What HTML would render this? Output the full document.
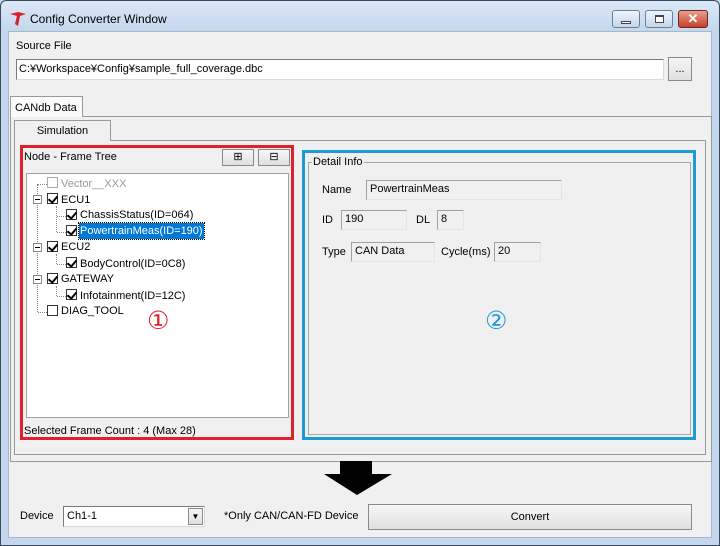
<!DOCTYPE html>
<html><head><meta charset="utf-8"><style>
*{box-sizing:border-box;margin:0;padding:0}
body{width:720px;height:546px;overflow:hidden;background:#c9dcf0;font-family:"Liberation Sans",sans-serif;font-size:11px;color:#000;position:relative}
.a{position:absolute}
.tb{border:1px solid #7a7a7a;border-right-color:#dcdcdc;border-bottom-color:#dcdcdc;background:#fff}
.ro{background:#f0f0f0;border:1px solid #a0a0a0;border-right-color:#e4e4e4;border-bottom-color:#e4e4e4;padding:2px 3px;font-size:11px}
.btn{background:linear-gradient(#f6f6f6,#e0e0e0);border:1px solid #8a8a8a;text-align:center}
.ti{position:absolute;height:16px;line-height:16px;font-size:11px;white-space:nowrap}
.cb{position:absolute;width:11px;height:11px;border:1px solid #333;background:#fff}
.cb.k::after{content:"";position:absolute;left:2px;top:0px;width:4px;height:7px;border:solid #000;border-width:0 2px 2px 0;transform:rotate(40deg)}
.pm{position:absolute;width:9px;height:9px;border:1px solid #888;background:#fff}
.pm::after{content:"";position:absolute;left:1px;top:3px;width:5px;height:1px;background:#000}
.dv{position:absolute;border-left:1px dotted #888}
.dh{position:absolute;border-top:1px dotted #888}
</style></head><body>
<div class="a" style="left:0;top:0;width:720px;height:546px;border:1px solid #3a4a5a;border-radius:6px 6px 0 0;background:linear-gradient(#dbe8f6,#c3d8ee 30px,#c3d8ee)"></div>
<svg class="a" style="left:8px;top:10px" width="22" height="18" viewBox="0 0 22 18"><path d="M2 4 L10 2 L18 4 L12 6 L10 16 L7 14 L9 6 Z" fill="#d8202a"/></svg>
<div class="a" style="left:30px;top:12px;font-size:12px;color:#000">Config Converter Window</div>
<div class="a" style="left:612px;top:10px;width:28px;height:18px;border:1px solid #6a7f98;border-radius:3px;background:linear-gradient(#eef4fb,#c6d6ea)"><div class="a" style="left:8px;top:10px;width:10px;height:3px;background:#fff;border:1px solid #445"></div></div>
<div class="a" style="left:645px;top:10px;width:28px;height:18px;border:1px solid #6a7f98;border-radius:3px;background:linear-gradient(#eef4fb,#c6d6ea)"><div class="a" style="left:9px;top:4px;width:9px;height:8px;border:1px solid #445;border-top-width:2px;background:#fff"></div></div>
<div class="a" style="left:678px;top:10px;width:30px;height:18px;border:1px solid #6a2a20;border-radius:3px;background:linear-gradient(#e8a090,#c8402c);color:#fff;font-weight:bold;font-size:13px;text-align:center;line-height:16px">✕</div>
<div class="a" style="left:8px;top:31px;width:704px;height:507px;background:#f0f0f0;border:1px solid #a8b8c8"></div>
<div class="a" style="left:16px;top:40px">Source File</div>
<div class="a tb" style="left:16px;top:59px;width:648px;height:21px;padding:3px 2px">C:¥Workspace¥Config¥sample_full_coverage.dbc</div>
<div class="a btn" style="left:668px;top:57px;width:24px;height:24px;line-height:22px">...</div>
<div class="a" style="left:10px;top:116px;width:702px;height:346px;border:1px solid #9a9a9a;background:#f0f0f0"></div>
<div class="a" style="left:10px;top:96px;width:73px;height:21px;border:1px solid #9a9a9a;border-bottom:none;background:#fbfbfb;padding:5px 4px">CANdb Data</div>
<div class="a" style="left:14px;top:140px;width:692px;height:315px;border:1px solid #9a9a9a;background:#f0f0f0"></div>
<div class="a" style="left:14px;top:120px;width:97px;height:21px;border:1px solid #9a9a9a;border-bottom:none;background:#f0f0f0;text-align:center;padding-top:4px">Simulation</div>
<div class="a" style="left:20px;top:145px;width:274px;height:295px;border:3px solid #e0202c"></div>
<div class="a" style="left:24px;top:151px">Node - Frame Tree</div>
<div class="a btn" style="left:222px;top:149px;width:32px;height:17px;font-size:11px;line-height:14px">⊞</div>
<div class="a btn" style="left:258px;top:149px;width:32px;height:17px;font-size:11px;line-height:14px">⊟</div>
<div class="a" style="left:26px;top:173px;width:263px;height:245px;background:#fff;border:1px solid #a0a0a0"></div>
<div class="dv" style="left:37px;top:184px;height:128px"></div>
<div class="dh" style="left:38px;top:184px;width:9px"></div>
<div class="dh" style="left:38px;top:312px;width:9px"></div>
<div class="dv" style="left:56px;top:206px;height:26px"></div>
<div class="dh" style="left:57px;top:216px;width:9px"></div>
<div class="dh" style="left:57px;top:232px;width:9px"></div>
<div class="dv" style="left:56px;top:254px;height:10px"></div>
<div class="dh" style="left:57px;top:264px;width:9px"></div>
<div class="dv" style="left:56px;top:286px;height:10px"></div>
<div class="dh" style="left:57px;top:296px;width:9px"></div>
<div class="pm" style="left:33px;top:195px"></div>
<div class="pm" style="left:33px;top:243px"></div>
<div class="pm" style="left:33px;top:275px"></div>
<div class="cb" style="left:47px;top:177px;border-color:#aaa"></div><div class="ti" style="left:61px;top:176px;color:#999">Vector__XXX</div>
<div class="cb k" style="left:47px;top:193px"></div><div class="ti" style="left:61px;top:192px">ECU1</div>
<div class="cb k" style="left:66px;top:209px"></div><div class="ti" style="left:80px;top:207px">ChassisStatus(ID=064)</div>
<div class="cb k" style="left:66px;top:225px"></div><div class="ti" style="left:79px;top:223px;background:#0078d7;color:#fff;padding:0 1px;outline:1px dotted #000">PowertrainMeas(ID=190)</div>
<div class="cb k" style="left:47px;top:241px"></div><div class="ti" style="left:61px;top:239px">ECU2</div>
<div class="cb k" style="left:66px;top:257px"></div><div class="ti" style="left:80px;top:256px">BodyControl(ID=0C8)</div>
<div class="cb k" style="left:47px;top:273px"></div><div class="ti" style="left:61px;top:271px">GATEWAY</div>
<div class="cb k" style="left:66px;top:289px"></div><div class="ti" style="left:80px;top:288px">Infotainment(ID=12C)</div>
<div class="cb" style="left:47px;top:305px"></div><div class="ti" style="left:61px;top:303px">DIAG_TOOL</div>
<div class="a" style="left:147px;top:306px;font-size:25px;color:#e0202c;font-family:'DejaVu Sans',sans-serif">①</div>
<div class="a" style="left:24px;top:425px">Selected Frame Count : 4 (Max 28)</div>
<div class="a" style="left:302px;top:150px;width:394px;height:290px;border:3px solid #1e9ad6"></div>
<div class="a" style="left:308px;top:162px;width:383px;height:273px;border:1px solid #a8a8a8"></div>
<div class="a" style="left:312px;top:156px;background:#f0f0f0;padding:0 1px">Detail Info</div>
<div class="a" style="left:322px;top:184px">Name</div>
<div class="a ro" style="left:366px;top:180px;width:196px;height:20px">PowertrainMeas</div>
<div class="a" style="left:322px;top:214px">ID</div>
<div class="a ro" style="left:341px;top:210px;width:66px;height:20px">190</div>
<div class="a" style="left:416px;top:214px">DL</div>
<div class="a ro" style="left:437px;top:210px;width:27px;height:20px">8</div>
<div class="a" style="left:322px;top:246px">Type</div>
<div class="a ro" style="left:351px;top:242px;width:84px;height:20px">CAN Data</div>
<div class="a" style="left:441px;top:246px">Cycle(ms)</div>
<div class="a ro" style="left:494px;top:242px;width:47px;height:20px">20</div>
<div class="a" style="left:485px;top:306px;font-size:25px;color:#1e9ad6;font-family:'DejaVu Sans',sans-serif">②</div>
<svg class="a" style="left:324px;top:461px" width="70" height="34"><path d="M16 0 H48 V13 H68 L33 34 L0 13 H16 Z" fill="#000"/></svg>
<div class="a" style="left:20px;top:510px">Device</div>
<div class="a tb" style="left:63px;top:506px;width:142px;height:21px;padding:3px 3px">Ch1-1</div>
<div class="a btn" style="left:188px;top:508px;width:15px;height:17px;font-size:8px;line-height:15px">▼</div>
<div class="a" style="left:224px;top:510px">*Only CAN/CAN-FD Device</div>
<div class="a btn" style="left:368px;top:504px;width:324px;height:26px;line-height:24px">Convert</div>
</body></html>
